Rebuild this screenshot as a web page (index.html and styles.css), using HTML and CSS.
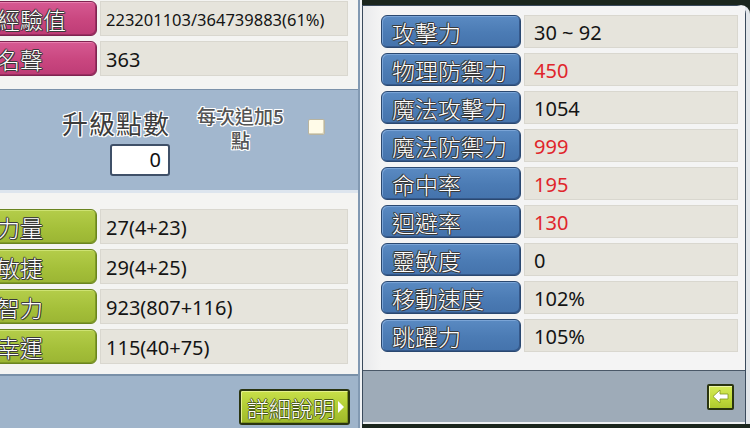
FILE: index.html
```html
<!DOCTYPE html>
<html lang="zh-Hant">
<head>
<meta charset="utf-8">
<title>角色能力值</title>
<link rel="stylesheet" href="styles.css">
</head>
<body>
<div class="screen">
  <section class="left-panel">
    <div class="rows rows-top">
      <div class="row"><div class="label pink">經驗值</div><div class="value value-small">223201103/364739883(61%)</div></div>
      <div class="row"><div class="label pink">名聲</div><div class="value">363</div></div>
    </div>
    <div class="points-band">
      <div class="points">
        <div class="points-title">升級點數</div>
        <div class="points-input">0</div>
      </div>
      <div class="add5"><span class="add5-line">每次追加5</span><span class="add5-line">點</span></div>
      <div class="checkbox"></div>
    </div>
    <div class="rows rows-stats">
      <div class="row"><div class="label green">力量</div><div class="value">27(4+23)</div></div>
      <div class="row"><div class="label green">敏捷</div><div class="value">29(4+25)</div></div>
      <div class="row"><div class="label green">智力</div><div class="value">923(807+116)</div></div>
      <div class="row"><div class="label green">幸運</div><div class="value">115(40+75)</div></div>
    </div>
    <div class="left-footer">
      <button class="detail-btn">詳細說明<span class="tri"></span></button>
    </div>
  </section>
  <section class="right-panel">
    <div class="right-body">
      <div class="rrow"><div class="label blue">攻擊力</div><div class="value rvalue">30 ~ 92</div></div>
      <div class="rrow"><div class="label blue">物理防禦力</div><div class="value rvalue red">450</div></div>
      <div class="rrow"><div class="label blue">魔法攻擊力</div><div class="value rvalue">1054</div></div>
      <div class="rrow"><div class="label blue">魔法防禦力</div><div class="value rvalue red">999</div></div>
      <div class="rrow"><div class="label blue">命中率</div><div class="value rvalue red">195</div></div>
      <div class="rrow"><div class="label blue">迴避率</div><div class="value rvalue red">130</div></div>
      <div class="rrow"><div class="label blue">靈敏度</div><div class="value rvalue">0</div></div>
      <div class="rrow"><div class="label blue">移動速度</div><div class="value rvalue">102%</div></div>
      <div class="rrow"><div class="label blue">跳躍力</div><div class="value rvalue">105%</div></div>
    </div>
    <div class="right-footer">
      <button class="back-btn" aria-label="返回">
        <svg width="17" height="15" viewBox="0 0 17 15"><path d="M1 7.5 L8 1 L8 5 L16 5 L16 10 L8 10 L8 14 Z" fill="#ffffff" stroke="#7d9420" stroke-width="0.8"/></svg>
      </button>
    </div>
  </section>
</div>
</body>
</html>
```
FILE: styles.css
```css
html, body {
  margin: 0;
  padding: 0;
}
body {
  width: 750px;
  height: 428px;
  overflow: hidden;
  background: #1b261d;
  font-family: "Noto Sans", "Liberation Sans", sans-serif;
}
.screen {
  display: flex;
  width: 750px;
  height: 428px;
  overflow: hidden;
  background: #1b261d;
}

/* ---------- left panel ---------- */
.left-panel {
  flex: none;
  width: 358px;
  padding-right: 4px;
  display: flex;
  flex-direction: column;
  background: #f4f4f2;
  box-shadow: inset -2px 0 0 #f1f3f5, inset -4px 0 0 #8299b2;
  overflow: hidden;
}
.rows {
  display: flex;
  flex-direction: column;
  gap: 5px;
  margin-left: -20px;
}
.rows-top {
  padding-top: 1px;
}
.rows-stats {
  margin-top: 16px;
}
.row {
  display: flex;
  gap: 3px;
  height: 35px;
}
.label {
  box-sizing: border-box;
  flex: none;
  display: flex;
  align-items: center;
  border-radius: 6px;
  font-family: "Noto Sans CJK TC", "Noto Sans CJK SC", sans-serif;
  font-size: 23px;
  font-weight: 300;
  color: #ffffff;
  text-shadow: 1px 0 0 #3a3a3a, -1px 0 0 #3a3a3a, 0 1px 0 #3a3a3a, 0 -1px 0 #3a3a3a,
    1px 1px 0 rgba(40, 40, 40, 0.6), -1px -1px 0 rgba(40, 40, 40, 0.6);
  white-space: nowrap;
}
.row .label {
  width: 117px;
  padding-left: 16px;
}
.pink {
  background: linear-gradient(#d65a92, #c9467f 55%, #be3c76);
  border: 1px solid #7e2450;
  box-shadow: inset 1px 1px 0 #e77fae, inset -1px -1px 0 #9b2d60;
}
.green {
  background: linear-gradient(#b4cd4a, #a5c03a 55%, #9bb533);
  border: 1px solid #6a8420;
  box-shadow: inset 1px 1px 0 #cde272, inset -1px -1px 0 #7f9a26;
}
.blue {
  background: linear-gradient(#5a8ac2, #4b7bb4 55%, #4473ac);
  border: 1px solid #2a4870;
  box-shadow: inset 1px 1px 0 #7aa4d6, inset -1px -1px 0 #35588a;
}
.value {
  box-sizing: border-box;
  flex: none;
  display: flex;
  align-items: center;
  background: #e6e4dc;
  border: 1px solid #d9d7cf;
  font-size: 20px;
  color: #141414;
  white-space: nowrap;
}
.row .value {
  width: 248px;
  padding-left: 5px;
  padding-top: 2px;
}
.row .value-small {
  font-size: 16.5px;
}
.red {
  color: #e0252b;
}

/* upgrade points band */
.points-band {
  margin-top: 13px;
  height: 100px;
  border-top: 1px solid #7c92aa;
  border-bottom: 3px solid #dde5ee;
  background: #a2b7ce;
  display: flex;
  align-items: flex-start;
  padding-left: 58px;
}
.points {
  width: 112px;
  display: flex;
  flex-direction: column;
  align-items: flex-end;
  padding-top: 18px;
}
.points-title {
  font-family: "Noto Sans CJK TC", sans-serif;
  font-size: 26px;
  line-height: 30px;
  letter-spacing: 1px;
  color: #3c3c3c;
  text-shadow: 1px 0 0 #fff, -1px 0 0 #fff, 0 1px 0 #fff, 0 -1px 0 #fff,
    1px 1px 0 #fff, -1px -1px 0 #fff, 1px -1px 0 #fff, -1px 1px 0 #fff;
}
.points-input {
  box-sizing: border-box;
  margin-top: 6px;
  width: 60px;
  height: 32px;
  background: #ffffff;
  border: 2px solid #3f5068;
  border-radius: 3px;
  text-align: right;
  padding-right: 7px;
  font-size: 20px;
  line-height: 28px;
  color: #111;
}
.add5 {
  width: 97px;
  margin-left: 22px;
  padding-top: 16px;
  display: flex;
  flex-direction: column;
  align-items: center;
  gap: 4px;
  font-family: "Noto Sans CJK TC", sans-serif;
  font-size: 19px;
  font-weight: 500;
  line-height: 20px;
  color: #545454;
  text-shadow: 1px 0 0 #fff, -1px 0 0 #fff, 0 1px 0 #fff, 0 -1px 0 #fff,
    1px 1px 0 #fff, -1px -1px 0 #fff, 1px -1px 0 #fff, -1px 1px 0 #fff;
}
.add5-line {
  display: block;
  height: 20px;
  white-space: nowrap;
}
.checkbox {
  box-sizing: border-box;
  margin-left: 19px;
  margin-top: 29px;
  width: 17px;
  height: 16px;
  background: #fffbe8;
  border: 1px solid #b8b4a0;
  border-radius: 2px;
  box-shadow: inset -1px -1px 0 #d8d2b8;
}

/* left footer */
.left-footer {
  margin-top: auto;
  height: 54px;
  border-top: 2px solid #7990a8;
  background: #9fb4ca;
  display: flex;
  justify-content: flex-end;
  align-items: flex-start;
  padding-right: 8px;
  padding-top: 13px;
  box-sizing: border-box;
}
.detail-btn {
  box-sizing: border-box;
  width: 111px;
  height: 36px;
  margin: 0;
  padding: 0 0 0 6px;
  display: flex;
  align-items: center;
  gap: 3px;
  background: linear-gradient(#c9e04a, #b1cc34 50%, #9fb92a);
  border: 2px solid #2a3410;
  border-radius: 3px;
  box-shadow: inset 1px 1px 0 #e4f08c, inset -1px -1px 0 #7f9620;
  font-family: "Noto Sans CJK TC", sans-serif;
  font-size: 22px;
  font-weight: 300;
  color: #ffffff;
  text-shadow: 1px 0 0 #4d5e18, -1px 0 0 #4d5e18, 0 1px 0 #4d5e18, 0 -1px 0 #4d5e18;
}
.tri {
  width: 0;
  height: 0;
  border-top: 6px solid transparent;
  border-bottom: 6px solid transparent;
  border-left: 6px solid #ffffff;
}

/* ---------- right panel ---------- */
.right-panel {
  flex: none;
  width: 384px;
  box-sizing: border-box;
  margin-top: 5px;
  margin-bottom: 4px;
  display: flex;
  flex-direction: column;
  border-left: 1px solid #3a4a5c;
  border-top: 1px solid #3a4a5c;
  border-right: 1px solid #3a4a5c;
  border-radius: 0 9px 0 0;
  background: #f3f3f3;
  box-shadow: 4px 0 0 #e2e6ea;
}
.right-body {
  flex: 1;
  padding: 9px 0 0 18px;
  display: flex;
  flex-direction: column;
  gap: 5px;
  background: linear-gradient(90deg, #e9eaec, #f4f4f4 18px);
}
.rrow {
  display: flex;
  gap: 3px;
  height: 33px;
}
.rrow .label {
  width: 140px;
  padding-left: 10px;
}
.rvalue {
  width: 214px;
  padding-left: 9px;
  padding-top: 2px;
}
.right-footer {
  flex: none;
  height: 51px;
  border-top: 1px solid #4a5868;
  border-bottom: 2px solid #eef0f2;
  background: #9eabb8;
  display: flex;
  justify-content: flex-end;
  align-items: center;
  padding-right: 11px;
}
.back-btn {
  box-sizing: border-box;
  width: 27px;
  height: 26px;
  margin: 0;
  padding: 0;
  display: flex;
  align-items: center;
  justify-content: center;
  background: linear-gradient(#d6ea5a, #c2dc3c 55%, #aec82e);
  border: 2px solid #2a3410;
  border-radius: 2px;
  box-shadow: inset 1px 1px 0 #eef6a8;
}
```
